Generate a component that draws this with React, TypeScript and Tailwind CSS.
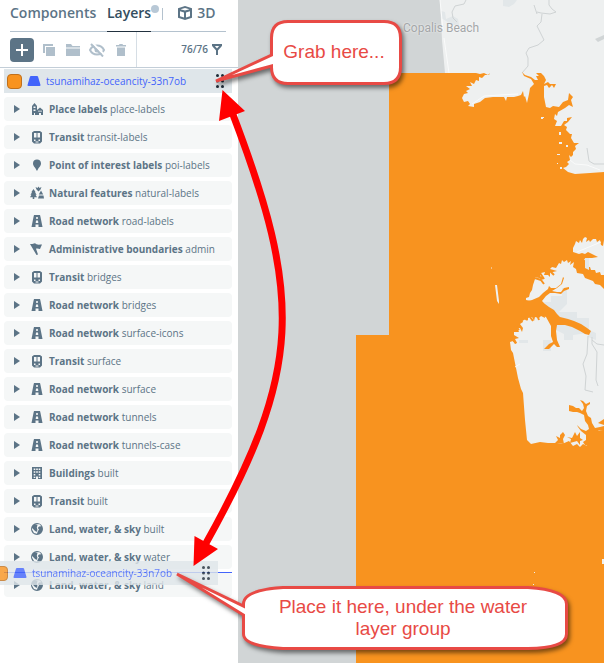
import type { ReactNode } from "react";

type IconName = "place" | "transit" | "pin" | "nature" | "road" | "flag" | "building" | "globe";

const GROUPS: { icon: IconName; name: string; part: string }[] = [
  { icon: "place", name: "Place labels", part: "place-labels" },
  { icon: "transit", name: "Transit", part: "transit-labels" },
  { icon: "pin", name: "Point of interest labels", part: "poi-labels" },
  { icon: "nature", name: "Natural features", part: "natural-labels" },
  { icon: "road", name: "Road network", part: "road-labels" },
  { icon: "flag", name: "Administrative boundaries", part: "admin" },
  { icon: "transit", name: "Transit", part: "bridges" },
  { icon: "road", name: "Road network", part: "bridges" },
  { icon: "road", name: "Road network", part: "surface-icons" },
  { icon: "transit", name: "Transit", part: "surface" },
  { icon: "road", name: "Road network", part: "surface" },
  { icon: "road", name: "Road network", part: "tunnels" },
  { icon: "road", name: "Road network", part: "tunnels-case" },
  { icon: "building", name: "Buildings", part: "built" },
  { icon: "transit", name: "Transit", part: "built" },
  { icon: "globe", name: "Land, water, & sky", part: "built" },
  { icon: "globe", name: "Land, water, & sky", part: "water" },
  { icon: "globe", name: "Land, water, & sky", part: "land" },
];

const ICONS: Record<IconName, ReactNode> = {
  place: (
    <path
      fillRule="evenodd"
      d="M2 13V4l2.500-3L7 4v4l3-2.500L13 8v5h-2v-2H9v2H5v-2H4v2zM3.500 4.500v1.500h2V4.500zM3.500 7.500V9h2V7.500zM8.500 8.500V10h1V8.500zM10.500 8.500V10h1V8.500z"
    />
  ),
  transit: (
    <path
      fillRule="evenodd"
      d="M4 1h6l2 1.500v9L10 13.500H4L2 11.500v-9zM4 3V7.500h2.500V3zM7.500 3v4.500H10V3zM4 9.500v1.500h1.500V9.500zM8.500 9.500v1.500H10V9.500zM5.500 11.500v1h3v-1z"
    />
  ),
  pin: <path d="M7 1.500c2.500 0 4 1.700 4 3.900C11 8 8.500 9.500 7 13 5.500 9.500 3 8 3 5.400 3 3.200 4.500 1.500 7 1.500z" />,
  nature: (
    <path d="M3.500 3l2.200 3.300H5l1.600 2.500H5.500L7 11.300H4.300V13H2.700v-1.700H0l1.500-2.500H.5l1.600-2.500h-.8zM5.500 1l2 1L8.500.5l1 1.500 2-1-1 2.500-2 2-2-2zM8.800 8.500L11 4.500l2.200 4zM8 12.500l1-3h4.500l.5 3z" />
  ),
  road: (
    <path
      fillRule="evenodd"
      d="M4 1h6l.500 2L12.500 13H8.500v-2.500h-3V13h-4L3.500 3zM6.200 3v2h1.600V3zM6 6.500L5.700 9h2.600L8 6.500z"
    />
  ),
  flag: <path d="M0 2c2 .3 3 0 5-.7l1.500 1C8.500 3 10 2.500 12 2.500L10 7c-1.500-.5-2.800-.7-4-.3L8 12.500 6.500 13z" />,
  building: (
    <path
      fillRule="evenodd"
      d="M2 1h10v12H8v-2.500H6V13H2zM3.700 2.500V4h1.600V2.500zM6.200 2.500V4h1.600V2.500zM8.700 2.500V4h1.600V2.500zM3.700 5.200v1.600h1.600V5.200zM6.200 5.200v1.600h1.600V5.200zM8.700 5.200v1.600h1.600V5.200zM3.700 8v1.500h1.600V8zM8.700 8v1.500h1.600V8zM3.700 10.700V12h1.600v-1.300zM8.700 10.700V12h1.600v-1.300z"
    />
  ),
  globe: (
    <path
      fillRule="evenodd"
      d="M7 1a6 6 0 1 1 0 12A6 6 0 0 1 7 1zM5 2.200L7.500 3 6.800 5.500 7.500 8l-1 2L4.500 8.500 2.200 6 2 7.500l2 3.500 3 .8.800-2.500L9 7.500 7.800 6 9 4.500l2.300-.3L9.500 2.300z"
    />
  ),
};

function GroupIcon({ name }: { name: IconName }) {
  return (
    <svg viewBox="0 0 14 14" className="size-[14px] shrink-0 fill-[#5c7486]" aria-hidden="true">
      {ICONS[name]}
    </svg>
  );
}

function LayerGroup({ icon, name, part }: { icon: IconName; name: string; part: string }) {
  return (
    <li>
      <button
        type="button"
        className="flex h-6 w-full items-center rounded bg-[#f5f7f7] pl-[10px] text-left text-[10px] leading-4 whitespace-nowrap text-[#5c7486]"
      >
        <svg viewBox="0 0 6 8" className="mr-[10px] h-2 w-[6px] shrink-0 fill-[#5c7486]" aria-hidden="true">
          <path d="M0 0l6 4-6 4z" />
        </svg>
        <GroupIcon name={icon} />
        <span className="ml-[5px]">
          <b className="font-bold">{name}</b> {part}
        </span>
      </button>
    </li>
  );
}

function DataLayer() {
  return (
    <>
      <span className="size-[15px] shrink-0 rounded-[4px] border border-[#c0701c] bg-[#f8931f]" />
      <svg viewBox="0 0 14 10" className="ml-[5px] h-[10px] w-[14px] shrink-0 fill-[#4264fb]" aria-hidden="true">
        <path d="M4 0h6q.8 0 1 .6L13.500 9q.2 1-1 1h-11q-1.200 0-1-1L3 .6Q3.200 0 4 0z" />
      </svg>
      <span className="ml-[5px] grow text-[10px] leading-4 text-[#4264fb]">tsunamihaz-oceancity-33n7ob</span>
      <svg viewBox="0 0 8 14" className="mr-2 h-[14px] w-2 shrink-0 fill-[#1d2b38]" aria-hidden="true">
        <circle cx="1.500" cy="1.500" r="1.500" />
        <circle cx="6.500" cy="1.500" r="1.500" />
        <circle cx="1.500" cy="7" r="1.500" />
        <circle cx="6.500" cy="7" r="1.500" />
        <circle cx="1.500" cy="12.500" r="1.500" />
        <circle cx="6.500" cy="12.500" r="1.500" />
      </svg>
    </>
  );
}

function Tabs() {
  return (
    <nav className="mx-[10px] mr-3 flex h-8 shrink-0 items-start border-b border-[#b4c2ce] text-[14px] leading-6 font-semibold text-[#5c7486]">
      <button type="button" className="h-8 w-[97px] pt-px pb-[7px] text-left">
        Components
      </button>
      <button type="button" className="relative h-8 border-b border-[#22313f] pt-px pb-[6px] text-[#344e60]">
        Layers
        <span className="absolute top-[5px] -right-2 size-2 rounded-full bg-[#b8c8d6]" />
      </button>
      <span className="mt-2 ml-[11px] h-3 w-px bg-[#b4c2ce]" />
      <button type="button" className="ml-[15px] flex items-center gap-[5px] pt-px">
        <svg viewBox="0 0 14 14" className="size-[14px]" aria-hidden="true">
          <path className="fill-[#5c7486]" d="M0 2.200L7 0l7 2.200v9.600L7 14l-7-2.200z" />
          <path className="fill-white" d="M2 5.200l4 1.200v5.200l-4-1.300zM12 5.200L8 6.400v5.200l4-1.300zM2.500 3.300L7 2l4.500 1.300L7 4.600z" />
        </svg>
        3D
      </button>
    </nav>
  );
}

function Toolbar() {
  return (
    <div className="flex h-9 shrink-0 items-center border-b border-[#c3ced8] pl-[10px]">
      <button type="button" aria-label="Add layer" className="grid size-6 place-items-center rounded-[4px] bg-[#5c7486]">
        <svg viewBox="0 0 12 12" className="size-3 stroke-white stroke-2" aria-hidden="true">
          <path d="M6 0v12M0 6h12" />
        </svg>
      </button>
      <button type="button" aria-label="Duplicate" className="ml-[9px]">
        <svg viewBox="0 0 12 12" className="size-3 fill-[#b0bfcb]" aria-hidden="true">
          <path d="M0 0h10v2H2V9H0zM3 3h9v9H3z" />
        </svg>
      </button>
      <button type="button" aria-label="Group" className="ml-[11px]">
        <svg viewBox="0 0 14 12" className="h-3 w-[14px] fill-[#b0bfcb]" aria-hidden="true">
          <path d="M0 0h5l1.500 2H14v1.500H0zM0 4.500h14V12H0z" />
        </svg>
      </button>
      <button type="button" aria-label="Hide" className="ml-[9px]">
        <svg viewBox="0 0 16 14" className="h-[14px] w-4" aria-hidden="true">
          <path
            className="fill-none stroke-[#b0bfcb] stroke-2"
            d="M1 7c1.500-3 4-4.500 7-4.500S13.500 4 15 7c-1.500 3-4 4.500-7 4.500S2.500 10 1 7z"
          />
          <circle cx="8" cy="7" r="2.500" className="fill-[#b0bfcb]" />
          <path className="stroke-white stroke-2" d="M3.500 0l12 12" />
          <path className="stroke-[#b0bfcb] stroke-2" d="M2 1l12 12.500" />
        </svg>
      </button>
      <button type="button" aria-label="Delete" className="ml-[11px]">
        <svg viewBox="0 0 10 12" className="h-3 w-[10px] fill-[#b0bfcb]" aria-hidden="true">
          <path d="M0 1h3l.500-1h3L7 1h3v1.500H0zM1 3.500h8V12H1z" />
        </svg>
      </button>
      <div className="ml-[10px] flex h-full grow items-center justify-end border-l border-[#d6dee5] pr-4 text-[10px] font-semibold text-[#5c7486]">
        76/76
        <button type="button" aria-label="Filter" className="ml-1">
          <svg viewBox="0 0 10 11" className="h-[11px] w-[10px] fill-none stroke-[#5c7486] stroke-2" aria-hidden="true">
            <path d="M0 1h10M1 1.500L5 6l4-4.500M5 5v6" />
          </svg>
        </button>
      </div>
    </div>
  );
}

function Sidebar() {
  return (
    <aside className="relative flex w-[238px] shrink-0 flex-col overflow-hidden bg-white">
      <Tabs />
      <Toolbar />
      <div className="mx-1 mt-px mr-[6px] flex h-6 shrink-0 items-center bg-[#dfe6ea] pl-[3px]">
        <DataLayer />
      </div>
      <ul className="mt-1 mr-[6px] ml-1 flex flex-col gap-1">
        {GROUPS.map((g) => (
          <LayerGroup key={`${g.name} ${g.part}`} {...g} />
        ))}
      </ul>
      {/* drop position and the layer being dragged over the list */}
      <span className="absolute top-[572px] right-[6px] left-1 h-px bg-[#4264fb]" />
      <div className="absolute top-[561px] -left-[10px] flex h-6 w-[228px] items-center bg-[#dfe6ea] pl-[3px] opacity-80">
        <DataLayer />
      </div>
    </aside>
  );
}

function TsunamiMap() {
  return (
    <main className="relative grow overflow-hidden bg-[#d1d5d6]">
      <svg
        viewBox="238 0 366 663"
        preserveAspectRatio="xMinYMin slice"
        className="absolute inset-0 size-full"
        role="img"
        aria-label="Map of the tsunami hazard area"
      >
        <path fill="#eef0f0" d="M440 0H604V663H445V73L442 40Z" />
        <path fill="#e2e7e9" d="M503 0h14l-3 4-5 3-6-1zM441 11l4 1 1 7 7-3 5 3 1 6-8 0-5-4-5-3z" />
        <path fill="#d1d5d6" d="M595 39l9-4v4l-6 3zM440 46l3 27h-3z" />
        <g fill="none" stroke="#cfd3d4" strokeWidth="1">
          <path d="M466 0l-2 4-9 2-3 6 1 6 4 4M549 0l0 5 3 4 4 3-6 2-9-1-4-1M542 14l-1 8-4 4 3 6 4 8-6 5-9 3-3 5 2 5 0 8-6 7M534 5l3 9M587 148l2 13 5 3h10" />
        </g>
        <path fill="none" stroke="#fafbfb" d="M444 38l5 35M440 0l3 30" />
        <path
          fill="#f8931f"
          d="M389 73L476 73L480 74L484 73L488 75L490 73L489 75L485 75L482 78L479 77L479 81L476 80L474 84L470 82L472 86L466 86L470 89L466 91L468 93L464 94L462 98L464 102L468 101L470 104L468 106L474 107L474 104L480 102L485 98L493 97L504 97L506 101L507 97L514 97L518 96L521 95L523 91L524 97L525 96L527 103L529 94L530 88L534 84L531 79L524 76L522 72L525 75L531 77L535 80L538 80L536 76L539 76L536 73L541 73L544 76L546 80L544 84L548 82L550 84L556 84L554 88L552 85L549 88L547 85L544 86L544 97L546 107L550 108L553 106L559 107L563 102L568 100L569 93L573 97L571 100L573 107L569 105L565 108L558 112L557 116L555 114L554 119L557 121L555 126L561 126L564 121L567 121L567 118L572 117L568 122L564 125L567 127L566 130L570 134L572 134L571 138L574 143L579 143L575 146L576 149L573 152L573 155L571 157L569 155L570 160L567 162L569 164L566 167L563 168L568 172L575 174L590 173L604 172V663H356V335H389Z"
        />
        <g fill="#eef0f0">
          <path d="M573 252L573 248L575 244L576 241L579 243L580 240L582 243L583 239L585 237L587 238L586 242L589 240L590 242L593 239L596 239L597 242L600 240L601 245L603 246L604 240V275L601 275L600 272L596 273L595 270L591 270L590 267L587 267L586 262L584 259L588 258L592 258L598 257L592 254L588 252L585 254L582 253L579 254L576 253Z" />
          <path d="M526 300L526 298L529 297L530 293L532 290L533 285L535 279L535 277L539 278L542 280L544 278L540 276L541 273L545 272L544 275L548 275L550 277L550 272L553 272L557 271L550 269L552 267L556 268L559 263L561 264L562 260L564 262L567 260L568 263L571 261L570 265L574 262L573 267L576 269L577 273L583 274L585 278L593 281L595 284L600 285L604 289V419L598 423L604 425V430L594 431L589 438L587 446L583 444L580 447L577 444L573 446L569 441L562 444L557 443L548 443L540 442L531 444L527 440L525 420L523 393L521 389L518 378L515 363L513 353L511 350L510 342L513 341L515 344L517 343L515 339L519 338L514 335L514 332L519 332L517 328L520 328L522 332L523 328L520 324L523 322L522 318L526 318L528 321L528 317L532 317L534 321L535 317L539 318L541 316L545 318L544 310L542 302L538 301L531 301Z" />
          <path d="M495 285l2 0 2 16 0 3-2-3zM491 268l1 1v-2zM493 264h2zM534 572h1v1h-1zM602 559h2v5h-2zM533 584h1v1h-1z" />
          <path d="M541 117h3v1h-1v1h-2zM559 132h2v3h-2zM559 142h3v2h-3zM566 145h2v2h-2zM557 154h3v1h-3zM557 163h1v1h-1zM560 167h2v2h-2z" />
        </g>
        <path
          fill="#e2e7e9"
          d="M544 302h7v-6h11v-8h5v16l-8 8h18v6h12v12l7 3v7l-8-3v-4l-15 2v5h-9v-6l-8-4zM519 340h9v3h-9zM543 340h8v11h-8zM585 258h4v12l-4-2z"
        />
        <path
          fill="#f8931f"
          d="M524 302L532 300L539 297L543 293L548 289L549 286L551 288L556 288L561 284L563 277L564 278L562 284L557 288L552 291L557 292L561 292L564 288L569 287L569 289L564 291L561 294L555 293L550 293L546 296L542 301L545 304L549 307L554 310L557 314L560 317L568 319L574 321L581 324L587 328L591 331L589 335L585 334L580 331L572 327L565 325L557 325L556 331L557 340L560 347L557 347L554 344L549 349L544 349L549 344L553 342L551 336L551 326L546 317L540 315L528 318L520 322Z"
        />
        <g fill="none" stroke="#f8931f" strokeWidth="2">
          <path d="M535 278l6 2 3 4M540 273l4 6M550 271l4 4M527 320l-4-4M533 321l-3-4M519 330l-4-4M516 343l-4-4M539 320l-2-5" />
        </g>
        <path
          fill="#f8931f"
          d="M569 405L573 406L576 408L579 408L582 411L584 408L583 404L580 400L583 401L586 404L590 402L590 404L587 406L586 411L588 416L591 418L592 423L595 428L600 427L604 426V431L599 430L596 433L592 435L592 439L589 441L588 446L585 445L583 442L586 440L586 435L581 431L578 427L577 425L581 429L586 431L589 429L588 425L585 421L584 415L580 413L577 412L573 412L569 411ZM555 443l3-3-2-4 4 2 0-3 3-3 2 3-2 4 1 5zM570 443l1-4-4-2 5 1 3-6 2 4 3-4 0 6 3 2-3 1 0 4-3-4z"
        />
        <g fill="none" stroke="#cfd3d4" strokeWidth="1">
          <path d="M588 336l-1 18-4 10 3 12-1 14 8 2M592 337v7l5 8-1 28 2 6M592 340l5 4 7 1" />
        </g>
        <path fill="none" stroke="#fafbfb" d="M577 252l24-10M515 367l5-3M570 160l5 4 12 1 13 5M472 104l12-8 16-1 18-1" />
      </svg>
      <span className="absolute top-5 left-[165px] font-['Roboto',sans-serif] text-[12px] leading-4 whitespace-nowrap text-[#a3a6a8] text-shadow-[0_0_2px_white]">
        Copalis Beach
      </span>
    </main>
  );
}

function Annotations() {
  return (
    <div className="pointer-events-none absolute top-0 left-0 h-[663px] w-[604px]">
      <svg viewBox="0 0 604 663" className="absolute inset-0 size-full overflow-visible" aria-hidden="true">
        <path d="M232 112C303 298 303 370 205 545" fill="none" stroke="#f00" strokeWidth="7" />
        <path d="M222.500 90L245 111L219 121ZM193.500 566L194.500 536L218 549Z" fill="#f00" />
        <g
          className="fill-white stroke-[#e84a45] stroke-[3] drop-shadow-[2px_3px_2px_rgba(0,0,0,0.5)]"
          strokeLinejoin="miter"
          strokeMiterlimit="2"
        >
          <path d="M288 21.500H384Q400.500 21.500 400.500 38V67Q400.500 83.500 384 83.500H288Q271.500 83.500 271.500 67V66L216 81L271.500 55V38Q271.500 21.500 288 21.500Z" />
          <path d="M283 587.500H528Q566.500 590 566.500 604V634Q566.500 648 528 648.500H283Q243.500 646 243.500 634V615L177 574L243.500 606V604Q243.500 590 283 587.500Z" />
        </g>
      </svg>
      <p className="absolute top-5 left-[268px] flex h-[65px] w-[132px] items-center justify-center pb-[2px] font-['Liberation_Sans',Arial,sans-serif] text-[19px] leading-[22px] text-[#e84a45]">
        Grab here...
      </p>
      <p className="absolute top-[586px] left-[240px] flex h-[64px] w-[326px] items-center justify-center px-9 text-center font-['Liberation_Sans',Arial,sans-serif] text-[19px] leading-[22px] text-[#e84a45]">
        Place it here, under the water layer group
      </p>
    </div>
  );
}

export default function App() {
  return (
    <div className="relative flex min-h-screen overflow-hidden font-['Open_Sans',sans-serif]">
      <Sidebar />
      <TsunamiMap />
      <Annotations />
    </div>
  );
}
